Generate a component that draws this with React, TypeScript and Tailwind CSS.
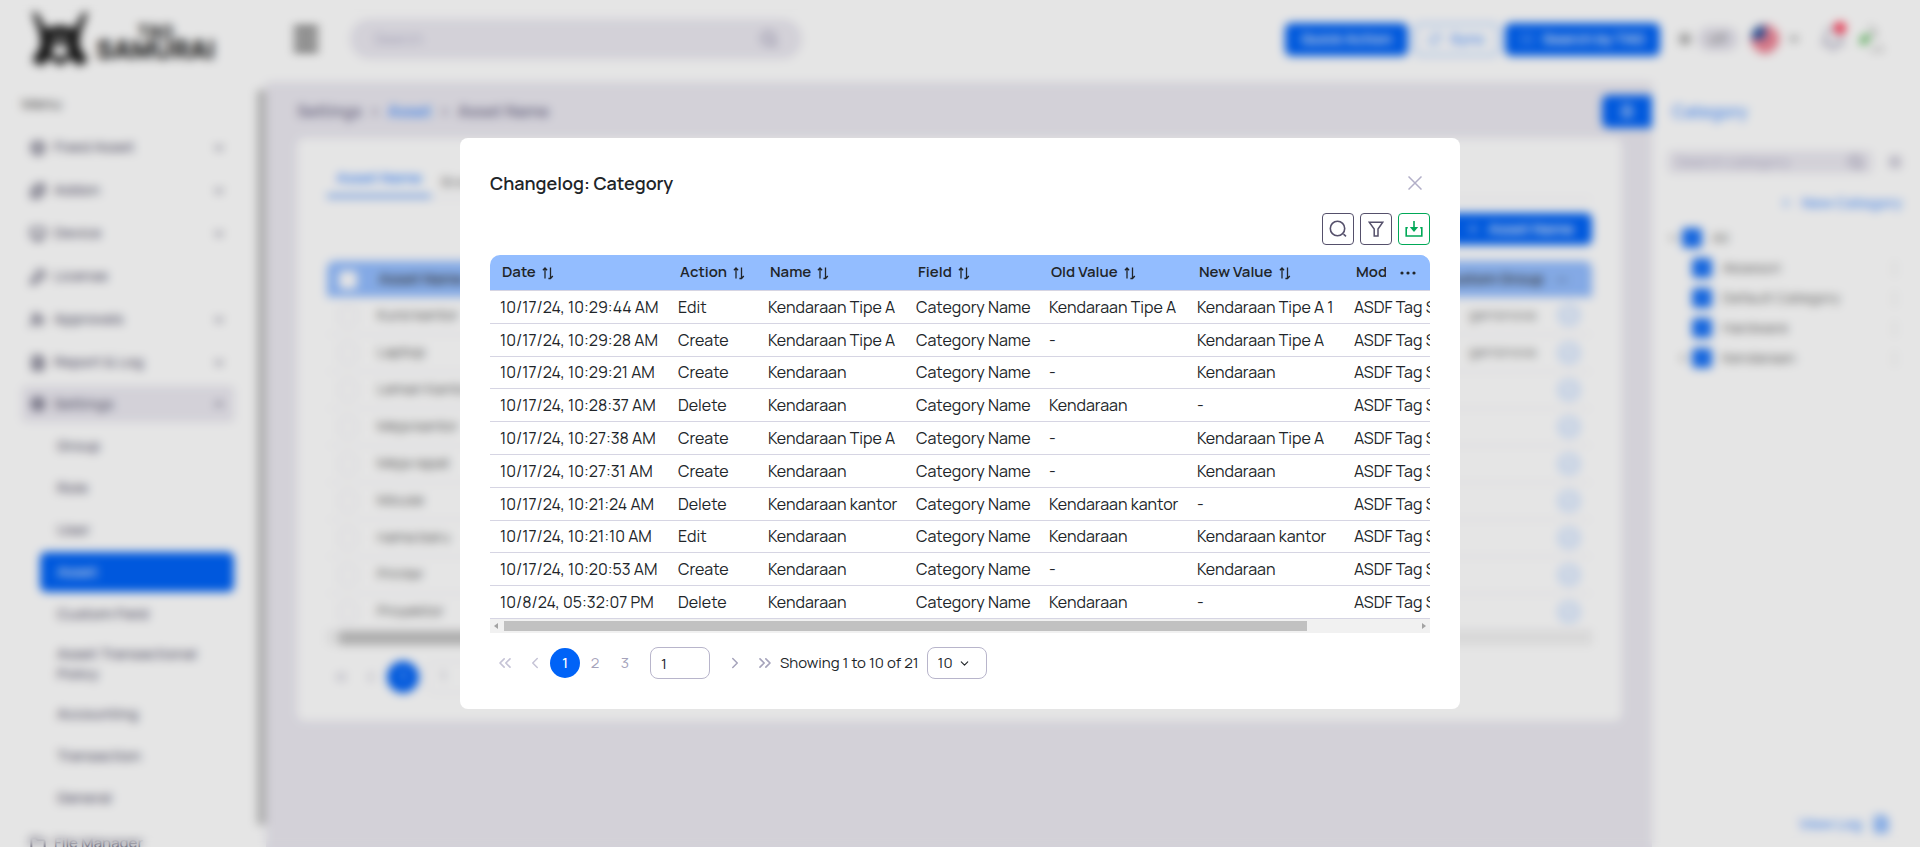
import React from "react";
import {
  Bell,
  Box,
  ChevronDown,
  ChevronLeft,
  ChevronRight,
  ChevronsLeft,
  ChevronsRight,
  ChevronUp,
  CircleCheck,
  FileText,
  Folder,
  KeyRound,
  Monitor,
  Plus,
  Puzzle,
  RefreshCw,
  ScanLine,
  Search,
  Settings,
  SlidersHorizontal,
  Sun,
  UserCheck,
} from "lucide-react";

const menu = [
  { label: "Fixed Asset", icon: Box, expandable: true },
  { label: "Addon", icon: Puzzle, expandable: true },
  { label: "Device", icon: Monitor, expandable: true },
  { label: "License", icon: KeyRound, expandable: false },
  { label: "Approvals", icon: UserCheck, expandable: true },
  { label: "Report & Log", icon: FileText, expandable: true },
];

const settingsMenu = [
  "Group",
  "Role",
  "User",
  "Asset",
  "Custom Field",
  "Asset Transactional Policy",
  "Accounting",
  "Transaction",
  "General",
];

const assets = [
  "Kursi kantor",
  "Laptop",
  "Lemari Kantor",
  "Meja kantor",
  "Meja rapat",
  "Mouse",
  "nama baru",
  "Printer",
  "Proyektor",
];

const categories = ["Aksesori", "Default Category", "Hardware", "Kendaraan"];

type LogRow = [string, string, string, string, string, string];

const log: LogRow[] = [
  ["10/17/24, 10:29:44 AM", "Edit", "Kendaraan Tipe A", "Category Name", "Kendaraan Tipe A", "Kendaraan Tipe A 1"],
  ["10/17/24, 10:29:28 AM", "Create", "Kendaraan Tipe A", "Category Name", "-", "Kendaraan Tipe A"],
  ["10/17/24, 10:29:21 AM", "Create", "Kendaraan", "Category Name", "-", "Kendaraan"],
  ["10/17/24, 10:28:37 AM", "Delete", "Kendaraan", "Category Name", "Kendaraan", "-"],
  ["10/17/24, 10:27:38 AM", "Create", "Kendaraan Tipe A", "Category Name", "-", "Kendaraan Tipe A"],
  ["10/17/24, 10:27:31 AM", "Create", "Kendaraan", "Category Name", "-", "Kendaraan"],
  ["10/17/24, 10:21:24 AM", "Delete", "Kendaraan kantor", "Category Name", "Kendaraan kantor", "-"],
  ["10/17/24, 10:21:10 AM", "Edit", "Kendaraan", "Category Name", "Kendaraan", "Kendaraan kantor"],
  ["10/17/24, 10:20:53 AM", "Create", "Kendaraan", "Category Name", "-", "Kendaraan"],
  ["10/8/24, 05:32:07 PM", "Delete", "Kendaraan", "Category Name", "Kendaraan", "-"],
];

const columns = [
  { title: "Date", width: "w-[178px]" },
  { title: "Action", width: "w-[90px]" },
  { title: "Name", width: "w-[148px]" },
  { title: "Field", width: "w-[133px]" },
  { title: "Old Value", width: "w-[148px]" },
  { title: "New Value", width: "w-[157px]" },
  { title: "Modified By", width: "w-[171px]" },
];

function Logo() {
  return (
    <div className="flex items-center gap-2">
      <svg viewBox="0 0 56 54" className="h-[54px] w-14" fill="#111">
        <path d="M0 0 L5 1 L14 17 Q28 10 42 17 L51 1 L56 0 L48 22 L47 34 L56 49 L46 54 L39 46 L33 50 L28 54 L23 50 L17 46 L10 54 L0 49 L9 34 L8 22 Z" />
        <path d="M17 25 Q28 20 39 25 L37 29 L19 29 Z" fill="#777" />
        <path d="M21 33 L35 33 L37 41 L28 46 L19 41 Z" fill="#fff" />
      </svg>
      <div className="flex flex-col items-center pt-1 font-black text-[#111]">
        <span className="text-lg leading-4">TAG</span>
        <span className="text-[26px] leading-5">SAMURAI</span>
      </div>
    </div>
  );
}

function Header() {
  return (
    <header className="flex h-[82px] shrink-0 items-center bg-white pr-9 pb-1 pl-8">
      <div className="w-[262px]">
        <Logo />
      </div>
      <button aria-label="Toggle menu" className="flex h-[26px] w-6 flex-col justify-between">
        <span className="h-1.5 w-full bg-[#666]" />
        <span className="h-1.5 w-full bg-[#666]" />
        <span className="h-1.5 w-full bg-[#666]" />
      </button>
      <div className="ml-8 flex h-10 w-[452px] items-center rounded-full bg-[#ebe9f1] px-6">
        <input aria-label="Search" placeholder="Search" className="flex-1 bg-transparent text-[15px] placeholder:text-[#b2afc8]" />
        <Search size={18} strokeWidth={3} className="text-[#9d99b3]" />
      </div>
      <div className="ml-auto flex items-center text-[15px]">
        <button className="h-[33px] w-[123px] rounded-md bg-[#0063f7] font-semibold text-white">Quick Action</button>
        <button className="ml-1.5 flex h-[33px] w-[85px] items-center justify-center gap-2 rounded-md border-2 border-[#9dc4ff] font-semibold text-[#4c93ff]">
          <RefreshCw size={14} /> Sync
        </button>
        <button className="ml-1.5 flex h-[33px] w-[155px] items-center justify-center gap-2 rounded-md bg-[#0063f7] font-semibold text-white">
          <ScanLine size={14} /> Search by TAG
        </button>
        <Sun size={14} strokeWidth={3} className="ml-[18px] text-[#666]" />
        <span className="ml-1.5 flex h-6 w-10 items-center justify-center rounded-full bg-[#e4e2ec] text-sm text-[#777]">off</span>
        <svg viewBox="0 0 30 30" className="ml-3 size-[30px]">
          <clipPath id="flag">
            <circle cx="15" cy="15" r="14" />
          </clipPath>
          <g clipPath="url(#flag)">
            <rect width="30" height="30" fill="#f4a9b4" />
            <path d="M0 3h30M0 11h30M0 19h30M0 27h30" stroke="#ea6078" strokeWidth="4" />
            <rect width="15" height="15" fill="#25539f" />
          </g>
        </svg>
        <ChevronDown size={12} strokeWidth={4} className="ml-2 text-[#555]" />
        <span className="relative ml-5">
          <Bell size={26} className="text-[#9d99b3]" />
          <span className="absolute -top-1 right-0 size-3 rounded-full bg-[#ff2b4a]" />
        </span>
        <svg viewBox="0 0 26 30" className="ml-3 h-[30px] w-[26px]">
          <path d="M2 15 L9 9 L13 14 L6 21 L2 20 Z" fill="#5dbb5d" />
          <path d="M12 2 L17 8 V14" fill="none" stroke="#999" strokeWidth="2" />
          <path d="M12 26 L24 26 L22 22" fill="none" stroke="#aaa" strokeWidth="2" />
        </svg>
      </div>
    </header>
  );
}

function Sidebar() {
  return (
    <aside className="flex w-[266px] shrink-0 bg-white text-[15px] font-medium text-[#55536b]">
      <nav className="flex-1 overflow-hidden pt-3 pr-[23px] pl-[22px]">
        <p className="mb-3 leading-5 text-[#555]">Menu</p>
        {menu.map(({ label, icon: Icon, expandable }) => (
          <a key={label} href="#" className="flex h-[43px] items-center px-2">
            <Icon size={16} strokeWidth={3} />
            <span className="ml-2 flex-1">{label}</span>
            {expandable && <ChevronDown size={14} strokeWidth={3} />}
          </a>
        ))}
        <a href="#" className="mt-0.5 flex h-9 items-center rounded bg-[#ebe9f1] px-2">
          <Settings size={16} strokeWidth={3} />
          <span className="ml-2 flex-1">Settings</span>
          <ChevronUp size={14} strokeWidth={3} />
        </a>
        <div className="flex flex-col gap-0.5 pt-1 pb-1 pl-[18px]">
          {settingsMenu.map((label) => (
            <a
              key={label}
              href="#"
              className={
                label === "Asset"
                  ? "flex min-h-10 items-center rounded-md bg-[#0063f7] px-[17px] text-white"
                  : "flex min-h-10 items-center px-[17px] py-2 leading-5"
              }
            >
              {label}
            </a>
          ))}
        </div>
        <a href="#" className="flex h-[43px] items-center px-2">
          <Folder size={16} strokeWidth={3} />
          <span className="ml-2">File Manager</span>
        </a>
      </nav>
      <div className="w-[9px] pt-2">
        <div className="h-[735px] bg-[#c1c1c1]" />
      </div>
    </aside>
  );
}

function AssetCard() {
  return (
    <section className="mr-[30px] rounded-lg bg-white px-[30px] pt-7 pb-7">
      <div className="flex border-b border-[#ebe9f1] text-[15px] font-semibold">
        <button className="h-8 w-[104px] border-b-4 border-[#80b1fb] pb-1 text-[#3d8bff]">Asset Name</button>
        <button className="h-8 px-2.5 text-[#999]">Brand</button>
      </div>
      <div className="flex justify-end pt-3.5 pb-4">
        <button className="flex h-8 w-36 items-center justify-center gap-2 rounded-md bg-[#0063f7] text-[15px] font-semibold text-white">
          <Plus size={14} /> Asset Name
        </button>
      </div>
      <table className="w-full text-[15px] text-[#555]">
        <thead>
          <tr className="h-9 bg-[#93bdff] text-left text-[#333]">
            <th className="w-12 rounded-tl-lg pl-3">
              <input type="checkbox" aria-label="Select all" className="size-[18px] appearance-none rounded bg-white align-middle" />
            </th>
            <th className="pl-1 font-semibold">Asset Name</th>
            <th className="w-[130px] pr-3 text-right font-semibold">Custom Group</th>
            <th className="w-9 rounded-tr-lg">···</th>
          </tr>
        </thead>
        <tbody>
          {assets.map((name, i) => (
            <tr key={name} className="h-[37px] border-b border-[#ebe9f1]">
              <td className="pl-3">
                <input type="checkbox" aria-label={name} className="size-[18px] appearance-none rounded border border-[#dddbe6] align-middle" />
              </td>
              <td className="pl-0.5">{name}</td>
              <td className="pr-5 text-right text-[#777]">{i < 2 ? "gerisnova" : ""}</td>
              <td>
                <CircleCheck size={22} className="ml-0.5 text-[#8fbcff]" />
              </td>
            </tr>
          ))}
        </tbody>
      </table>
      <div className="h-3.5 bg-[#f1f1f1] px-3">
        <div className="h-3.5 w-4/5 bg-[#c1c1c1]" />
      </div>
      <div className="flex items-center pt-4 text-[15px] text-[#a5a3bb]">
        <ChevronsLeft size={16} className="ml-1.5" />
        <ChevronLeft size={16} className="ml-3.5" />
        <span className="ml-2 flex size-8 items-center justify-center rounded-full bg-[#0063f7] text-white">1</span>
        <span className="ml-2 flex h-8 w-[60px] items-center rounded-lg border border-[#ebe9f1] pl-3">1</span>
      </div>
    </section>
  );
}

function CategoryPanel() {
  return (
    <aside className="flex w-[268px] shrink-0 flex-col bg-white pr-[18px] pl-4 text-[15px] text-[#666]">
      <h2 className="pt-[18px] pl-1 text-[17px] leading-6 font-semibold text-[#5c9dff]">Category</h2>
      <div className="mt-[27px] flex items-center gap-4">
        <div className="flex h-[22px] w-[204px] shrink-0 items-center rounded bg-[#ebe9f1] px-2">
          <input aria-label="Search category" placeholder="Search category" className="w-full bg-transparent placeholder:text-[#b2afc8]" />
          <Search size={16} strokeWidth={3} className="shrink-0 text-[#9d99b3]" />
        </div>
        <SlidersHorizontal size={14} strokeWidth={3} className="shrink-0 text-[#9d99b3]" />
      </div>
      <button className="mt-5 ml-auto flex items-center gap-2 leading-5 font-semibold text-[#5c9dff]">
        <Plus size={14} /> New Category
      </button>
      <ul className="mt-2.5">
        <li className="flex h-[30px] items-center">
          <ChevronDown size={10} strokeWidth={4} />
          <input type="checkbox" aria-label="All" defaultChecked className="mr-2.5 ml-1 size-5 appearance-none rounded bg-[#1a73f8]" />
          All
        </li>
        {categories.map((name) => (
          <li key={name} className="flex h-[30px] items-center pl-2.5">
            <span className="w-2.5">{name === "Kendaraan" && <ChevronRight size={10} strokeWidth={4} />}</span>
            <input type="checkbox" aria-label={name} defaultChecked className="mr-2.5 ml-1 size-5 appearance-none rounded bg-[#1a73f8]" />
            <span className="flex-1">{name}</span>
            <span className="text-[#bbb]">⋮</span>
          </li>
        ))}
      </ul>
      <a href="#" className="mt-auto mr-3 mb-3 flex items-center gap-2.5 self-end font-semibold text-[#5c9dff]">
        View Log <FileText size={18} strokeWidth={3} />
      </a>
    </aside>
  );
}

function SortIcon() {
  return (
    <svg viewBox="0 0 12 14" className="h-3.5 w-3" fill="none" stroke="currentColor" strokeWidth="1.3">
      <path d="M3 12.5V2M.9 4.2L3 2l2.1 2.2" />
      <path d="M8.5 1.5V12M6.4 12.5H8.5L10.8 10" />
    </svg>
  );
}

function ChangelogTable() {
  return (
    <div>
      <div className="overflow-x-auto rounded-t-[10px] [scrollbar-width:none]">
        <table className="h-[364px] w-[1069px] table-fixed border-separate border-spacing-0 text-left text-base whitespace-nowrap text-[#212529]">
          <thead>
            <tr>
              {columns.map(({ title, width }) => (
                <th key={title} className={`${width} h-9 border-b border-[#d6d5e3] bg-[#93bdff] py-0 pl-3 text-[15px] font-semibold`}>
                  <span className="flex items-center gap-1.5">
                    {title} <SortIcon />
                  </span>
                </th>
              ))}
              <th className="sticky right-0 w-11 border-b border-[#d6d5e3] bg-[#93bdff] p-0">
                <button aria-label="Choose columns" className="flex w-full justify-center">
                  <svg viewBox="0 0 16 4" className="h-1 w-4" fill="currentColor">
                    <circle cx="2" cy="2" r="1.6" />
                    <circle cx="8" cy="2" r="1.6" />
                    <circle cx="14" cy="2" r="1.6" />
                  </svg>
                </button>
              </th>
            </tr>
          </thead>
          <tbody>
            {log.map((row) => (
              <tr key={row[0]}>
                {row.map((value, i) => (
                  <td key={i} className="h-8 border-b border-[#d6d5e3] py-0 pl-2.5">
                    {value}
                  </td>
                ))}
                <td className="border-b border-[#d6d5e3] py-0 pl-2.5">ASDF Tag Samurai</td>
                <td className="sticky right-0 border-b border-[#d6d5e3] p-0" />
              </tr>
            ))}
          </tbody>
        </table>
      </div>
      <div className="flex h-3.5 items-center justify-between bg-[#f1f1f1] px-1">
        <svg viewBox="0 0 4 6" className="h-1.5 w-1" fill="#a3a3a3">
          <path d="M4 0v6L0 3z" />
        </svg>
        <div className="mx-1.5 h-2.5 flex-1">
          <div className="h-full w-[88%] bg-[#c1c1c1]" />
        </div>
        <svg viewBox="0 0 4 6" className="h-1.5 w-1" fill="#a3a3a3">
          <path d="M0 0v6l4-3z" />
        </svg>
      </div>
    </div>
  );
}

function Pagination() {
  return (
    <div className="mt-3.5 flex h-8 items-center text-[15px] text-[#a5a3bb]">
      <button aria-label="First page" className="flex size-[30px] items-center justify-center text-[#c5c3d6]">
        <ChevronsLeft size={20} />
      </button>
      <button aria-label="Previous page" className="flex size-[30px] items-center justify-center text-[#c5c3d6]">
        <ChevronLeft size={18} />
      </button>
      <button className="size-[30px] rounded-full bg-[#0063f7] font-medium text-white">1</button>
      <button className="size-[30px]">2</button>
      <button className="size-[30px]">3</button>
      <input
        aria-label="Page number"
        defaultValue="1"
        className="mx-2.5 h-8 w-[60px] rounded-lg border border-[#b8b5cb] px-2.5 text-[15px] text-[#212529]"
      />
      <button aria-label="Next page" className="flex size-[30px] items-center justify-center">
        <ChevronRight size={18} />
      </button>
      <button aria-label="Last page" className="flex size-[30px] items-center justify-center">
        <ChevronsRight size={20} />
      </button>
      <span className="text-[#212529]">Showing 1 to 10 of 21</span>
      <span className="relative ml-2">
        <select
          aria-label="Rows per page"
          className="block h-8 w-[60px] appearance-none rounded-lg border border-[#b8b5cb] bg-white pl-2.5 text-[15px] text-[#212529]"
        >
          <option>10</option>
          <option>20</option>
          <option>50</option>
        </select>
        <ChevronDown size={13} className="pointer-events-none absolute top-2.5 right-4 text-[#212529]" />
      </span>
    </div>
  );
}

function ChangelogDialog() {
  return (
    <div role="dialog" aria-labelledby="changelog-title" className="w-[1000px] rounded-lg bg-white px-[30px] pt-[30px] pb-[30px]">
      <div className="flex h-[30px] items-center justify-between">
        <h1 id="changelog-title" className="text-lg font-semibold text-[#212529]">
          Changelog: Category
        </h1>
        <button aria-label="Close" className="mr-2 text-[#b2afc8]">
          <svg viewBox="0 0 14 14" className="size-3.5" fill="none" stroke="currentColor" strokeWidth="1.5">
            <path d="M.5.5l13 13M13.5.5l-13 13" />
          </svg>
        </button>
      </div>
      <div className="mt-[15px] mb-2.5 flex justify-end gap-1.5">
        <button aria-label="Search" className="flex size-8 items-center justify-center rounded border border-[#55506b] text-[#55506b]">
          <svg viewBox="0 0 18 18" className="size-[18px]" fill="none" stroke="currentColor" strokeWidth="1.6">
            <circle cx="8.5" cy="8.5" r="7.2" />
            <path d="M14.5 14.2L17 16.4" />
          </svg>
        </button>
        <button aria-label="Filter" className="flex size-8 items-center justify-center rounded border border-[#55506b] text-[#55506b]">
          <svg viewBox="0 0 16 16" className="size-4" fill="none" stroke="currentColor" strokeWidth="1.5">
            <path d="M1.2 1.2H14.8L10 8V15H6.2V8Z" />
          </svg>
        </button>
        <button aria-label="Download" className="flex size-8 items-center justify-center rounded border border-[#00a857] text-[#00a857]">
          <svg viewBox="0 0 18 16" className="h-4 w-[18px]" fill="none" stroke="currentColor" strokeWidth="1.6">
            <path d="M2.8 6.8H1.2V15H16.8V6.8H15.2" />
            <path d="M9 0V8" />
            <path d="M4.8 6H13.2L9 11Z" fill="currentColor" stroke="none" />
          </svg>
        </button>
      </div>
      <ChangelogTable />
      <Pagination />
    </div>
  );
}

export default function App() {
  return (
    <div className="font-['Manrope','Inter',sans-serif]">
      <div className="flex h-screen flex-col overflow-hidden bg-[#ebe9f1]">
        <Header />
        <div className="flex min-h-0 flex-1">
          <Sidebar />
          <main className="min-w-0 flex-1 pl-[31px]">
            <div className="flex h-14 items-center justify-between pt-0.5 text-base font-semibold text-[#6f6b8a]">
              <nav className="flex gap-2">
                <a href="#">Settings</a>
                <span>›</span>
                <a href="#" className="text-[#3d8bff]">
                  Asset
                </a>
                <span>›</span>
                <span>Asset Name</span>
              </nav>
              <button aria-label="Toggle panel" className="flex h-[33px] w-[50px] items-center justify-center rounded-l-md bg-[#0063f7] text-white">
                <FileText size={14} />
              </button>
            </div>
            <AssetCard />
          </main>
          <CategoryPanel />
        </div>
      </div>
      <div className="fixed inset-0 flex items-center justify-center bg-black/10 backdrop-blur-[5px]">
        <ChangelogDialog />
      </div>
    </div>
  );
}
